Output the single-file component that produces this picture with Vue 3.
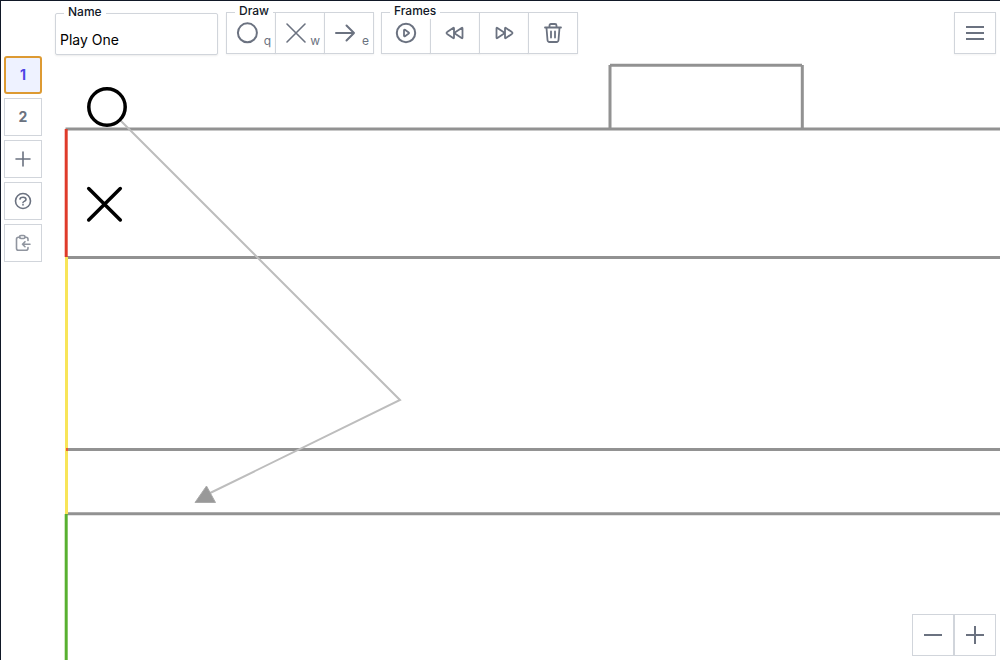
<script setup>
import { ref } from 'vue'

const name = ref('Play One')
const frames = [1, 2]
const active = ref(1)
</script>

<template>
  <main class="app">
    <svg class="field" role="img" aria-label="Playing field">
      <g class="lines">
        <path d="M64.500 128H4000M66 256.500H4000M65 448.500H4000M66 512.700H4000" />
        <path d="M609 128V64M609 64.200H801M801.300 64V128" />
      </g>
      <path class="edge red" d="M65.200 128V256" />
      <path class="edge yellow" d="M65.500 256V513" />
      <path class="tick" d="M65 448.500H67" />
      <path class="edge green" d="M65.200 513V4000" />
      <path class="route" d="M106 106L399 399L205 494" />
      <path class="arrowhead" d="M205.500 485L214.500 501.500H194Z" />
      <circle class="player" cx="106" cy="106" r="18.200" />
      <path class="player" d="M87.700 187.500L119.300 219M119.300 187.500L87.700 219" />
    </svg>

    <header class="toolbar">
      <div class="group name">
        <label class="legend" for="play-name">Name</label>
        <input id="play-name" v-model="name" type="text" />
      </div>
      <div class="group" role="group" aria-labelledby="draw-label">
        <span id="draw-label" class="legend">Draw</span>
        <button class="btn draw" type="button" aria-label="Circle">
          <svg viewBox="0 0 24 24"><circle cx="12.400" cy="11.800" r="9.500" /></svg><kbd>q</kbd>
        </button>
        <button class="btn draw" type="button" aria-label="Cross">
          <svg viewBox="0 0 24 24"><path class="fine" d="M3 3L21 21M21 3L3 21" /></svg><kbd>w</kbd>
        </button>
        <button class="btn draw" type="button" aria-label="Arrow">
          <svg viewBox="0 0 24 24"><path d="M3 12H21M13.500 4.500L21 12L13.500 19.500" /></svg><kbd>e</kbd>
        </button>
      </div>
      <div class="group" role="group" aria-labelledby="frames-label">
        <span id="frames-label" class="legend">Frames</span>
        <button class="btn" type="button" aria-label="Play">
          <svg viewBox="0 0 24 24"><circle cx="12" cy="12" r="9.200" /><path class="medium" d="M10 9.300C10 8.800 10.500 8.500 11 8.800L14.700 11.400C15.100 11.700 15.100 12.300 14.700 12.600L11 15.200C10.500 15.500 10 15.200 10 14.700Z" /></svg>
        </button>
        <button class="btn" type="button" aria-label="Previous frame">
          <svg viewBox="0 0 24 24"><path class="medium" d="M11 7.400V16.600Q11 17.600 10.100 17L4.100 12.900Q2.900 12 4.100 11.100L10.100 7Q11 6.400 11 7.400ZM19.500 7.400V16.600Q19.500 17.600 18.600 17L12.600 12.900Q11.400 12 12.600 11.100L18.600 7Q19.500 6.400 19.500 7.400Z" /></svg>
        </button>
        <button class="btn" type="button" aria-label="Next frame">
          <svg viewBox="0 0 24 24"><path class="medium" d="M13 7.400V16.600Q13 17.600 13.900 17L19.900 12.900Q21.100 12 19.900 11.100L13.900 7Q13 6.400 13 7.400ZM4.500 7.400V16.600Q4.500 17.600 5.400 17L11.400 12.900Q12.600 12 11.400 11.100L5.400 7Q4.500 6.400 4.500 7.400Z" /></svg>
        </button>
        <button class="btn" type="button" aria-label="Delete frame">
          <svg viewBox="0 0 24 24"><path class="medium" d="M4 6.500H20M8.500 6V4.500Q8.500 3 10 3H14Q15.500 3 15.500 4.500V6M5.500 7L6.500 19Q6.700 21 8.500 21H15.500Q17.300 21 17.500 19L18.500 7M10 10.500V16.500M14 10.500V16.500" /></svg>
        </button>
      </div>
      <button class="btn square menu" type="button" aria-label="Menu">
        <svg viewBox="0 0 24 24"><path class="flat" d="M3 6H21M3 12H21M3 18H21" /></svg>
      </button>
    </header>

    <nav class="sidebar" aria-label="Frames and tools">
      <button
        v-for="frame in frames"
        :key="frame"
        class="btn small"
        :class="{ active: frame === active }"
        type="button"
        @click="active = frame"
      >{{ frame }}</button>
      <button class="btn small" type="button" aria-label="Add frame">
        <svg viewBox="0 0 20 20"><path class="fine" d="M10 3V17M3 10H17" /></svg>
      </button>
      <button class="btn small" type="button" aria-label="Help">
        <svg viewBox="0 0 20 20"><circle class="fine" cx="10" cy="10" r="7.500" /><path class="fine" d="M7 8C7.600 5.700 13 5.500 13 8.500C13 10.500 10 10.200 10 11.600M10 13.500V14" /></svg>
      </button>
      <button class="btn small" type="button" aria-label="Import from clipboard" disabled>
        <svg viewBox="0 0 20 20"><path class="fine" d="M7 4.200H5.500Q3.500 4.200 3.500 6.200V15.200Q3.500 17.300 5.500 17.300H13Q15 17.300 15 15.300V14.500M12 4.200H13Q15 4.200 15 6.200V7.500M17 11.200H9.500M12 8.700L9.500 11.200L12 13.700" /><rect class="fine" x="6.500" y="2.500" width="5.500" height="3" rx="1.500" /></svg>
      </button>
    </nav>

    <div class="zoom">
      <button class="btn square" type="button" aria-label="Zoom out">
        <svg viewBox="0 0 24 24"><path class="flat" d="M3 12H21" /></svg>
      </button>
      <button class="btn square" type="button" aria-label="Zoom in">
        <svg viewBox="0 0 24 24"><path class="flat" d="M3 12H21M12 3V21" /></svg>
      </button>
    </div>
  </main>
</template>

<style>
body {
  margin: 0;
  background: #fff;
}
</style>

<style scoped>
.app {
  position: relative;
  display: flex;
  flex-direction: column;
  min-height: 100vh;
  box-sizing: border-box;
  overflow: hidden;
  border-top: 1px solid #111827;
  border-left: 1px solid #111827;
  font-family: Inter, "Liberation Sans", sans-serif;
}
.field {
  position: absolute;
  inset: 0;
  width: 100%;
  height: 100%;
  fill: none;
}
.lines { stroke: #929292; stroke-width: 3; }
.edge { stroke-width: 3; }
.red { stroke: #df3b2a; }
.yellow { stroke: #f8e559; }
.green { stroke: #58b030; }
.tick { stroke: #e8612c; stroke-width: 3; }
.route { stroke: #bdbdbd; stroke-width: 2; }
.arrowhead { fill: #999; stroke: #aaa; stroke-width: 1; }
.player { fill: #fff; stroke: #000; stroke-width: 3.5; stroke-linecap: round; }

.toolbar {
  position: relative;
  display: flex;
  align-items: flex-start;
  gap: 8px;
  padding: 11px 4px 0 54px;
}
.group {
  position: relative;
  display: flex;
}
.group + .group + .group { margin-left: -1px; }
.group .btn + .btn { margin-left: -1px; }
.legend {
  position: absolute;
  z-index: 1;
  top: -9px;
  left: 9px;
  padding: 0 4px;
  background: #fff;
  color: #111827;
  font-size: 12px;
  font-weight: 500;
  line-height: 16px;
}
.name { margin-top: 1px; }
.name input {
  width: 163px;
  height: 42px;
  box-sizing: border-box;
  padding: 13px 4px 3px;
  border: 1px solid #d1d5db;
  border-radius: 2px;
  background: #fff;
  box-shadow: 0 1px 2px rgba(0, 0, 0, 0.08);
  color: #000;
  font: 14px/20px Inter, "Liberation Sans", sans-serif;
}
.btn {
  position: relative;
  display: flex;
  align-items: center;
  justify-content: center;
  width: 50px;
  height: 42px;
  box-sizing: border-box;
  padding: 0;
  border: 1px solid #d1d5db;
  background: #fff;
  box-shadow: 0 1px 2px rgba(0, 0, 0, 0.05);
  color: #6b7280;
  font: 700 14px/20px Inter, "Liberation Sans", sans-serif;
}
.btn svg {
  width: 24px;
  height: 24px;
  fill: none;
  stroke: currentColor;
  stroke-width: 2;
  stroke-linecap: round;
  stroke-linejoin: round;
}
.btn .fine { stroke-width: 1.6; }
.btn .medium { stroke-width: 1.8; }
.btn .flat { stroke-linecap: butt; }
.draw {
  justify-content: flex-start;
  padding-left: 8px;
}
.draw kbd {
  position: absolute;
  right: 4px;
  bottom: 4px;
  font: 12px/16px Inter, "Liberation Sans", sans-serif;
}
.square { width: 42px; }
.menu { margin-left: auto; }
.sidebar {
  position: relative;
  display: flex;
  flex-direction: column;
  align-self: flex-start;
  gap: 4px;
  padding: 1px 0 0 3px;
}
.small {
  width: 38px;
  height: 38px;
  box-shadow: none;
}
.small svg {
  width: 20px;
  height: 20px;
}
.small:disabled svg { opacity: 0.75; }
.active {
  border: 2px solid #dd9a32;
  border-radius: 3px;
  background: #eef2ff;
  color: #4f46e5;
}
.zoom {
  position: relative;
  display: flex;
  align-self: flex-end;
  margin-top: auto;
  padding: 0 4px 4px 0;
}
.zoom .btn { box-shadow: none; }
</style>
